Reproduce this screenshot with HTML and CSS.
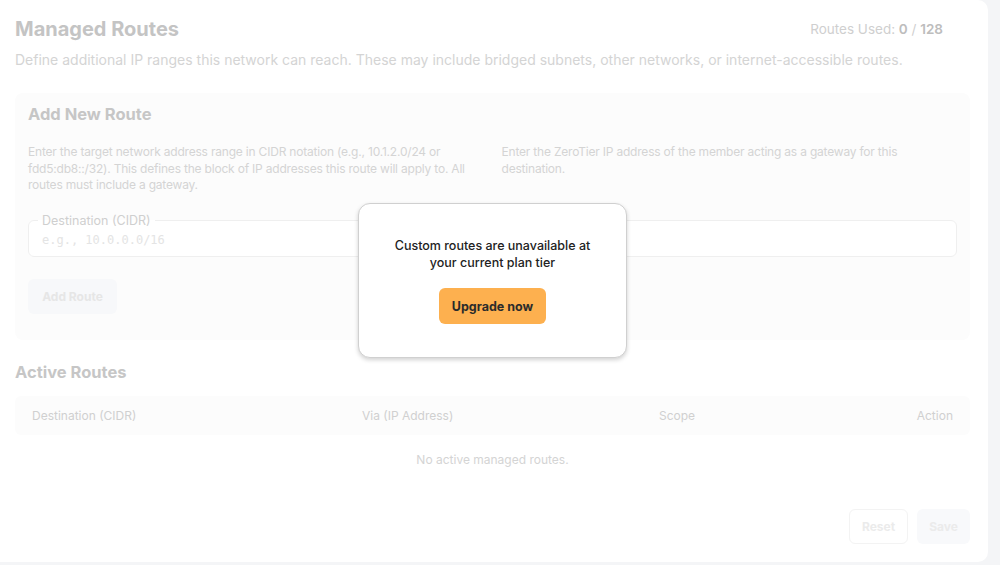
FILE: index.html
```html
<!DOCTYPE html>
<html lang="en">
<head>
  <meta charset="UTF-8">
  <meta name="viewport" content="width=device-width, initial-scale=1.0">
  <title>Managed Routes</title>
  <link rel="stylesheet" href="styles.css">
</head>
<body>
  <div class="card">
    <div class="card-content">
      <div class="card-header">
        <h1>Managed Routes</h1>
        <div class="usage">Routes Used: <b>0</b> / <b>128</b></div>
      </div>
      <p class="description">Define additional IP ranges this network can reach. These may include bridged subnets, other networks, or internet-accessible routes.</p>

      <div class="panel">
        <h2>Add New Route</h2>
        <div class="route-grid">
          <p class="help">Enter the target network address range in CIDR notation (e.g., 10.1.2.0/24 or fdd5:db8::/32). This defines the block of IP addresses this route will apply to. All routes must include a gateway.</p>
          <p class="help">Enter the ZeroTier IP address of the member acting as a gateway for this destination.</p>
          <fieldset class="field">
            <legend>Destination (CIDR)</legend>
            <input type="text" placeholder="e.g., 10.0.0.0/16" disabled>
          </fieldset>
          <fieldset class="field">
            <legend>Via (IP Address)</legend>
            <input type="text" placeholder="e.g., 10.0.0.1" disabled>
          </fieldset>
        </div>
        <button class="add-button" disabled>Add Route</button>
      </div>

      <h2 class="section-title">Active Routes</h2>
      <div class="table-head">
        <span>Destination (CIDR)</span>
        <span>Via (IP Address)</span>
        <span>Scope</span>
        <span>Action</span>
      </div>
      <p class="empty">No active managed routes.</p>

      <div class="footer">
        <button class="reset-button" disabled>Reset</button>
        <button class="save-button" disabled>Save</button>
      </div>
    </div>

    <div class="upgrade-modal">
      <p>Custom routes are unavailable at your current plan tier</p>
      <button class="upgrade-button">Upgrade now</button>
    </div>
  </div>
</body>
</html>
```

FILE: styles.css
```css
body {
  font-family: Inter, "Noto Sans", sans-serif;
  background-color: #f4f5f7;
  margin: 0;
  overflow: hidden;
}

.card {
  position: relative;
  width: 988px;
  height: 562px;
  background-color: #fff;
  border-radius: 0 10px 10px 0;
  box-sizing: border-box;
}

.card-content {
  padding: 17px 18px 0 15px;
}

.card-header {
  display: flex;
  justify-content: space-between;
  align-items: center;
}

h1 {
  margin: 0;
  font-size: 20px;
  line-height: 24px;
  font-weight: 700;
  color: #c4c4c4;
}

.usage {
  margin-right: 27px;
  font-size: 13.5px;
  color: #cfcfcf;
}

.usage b {
  color: #bdbdbd;
  font-weight: 600;
}

.description {
  margin: 9px 0 0;
  font-size: 14px;
  line-height: 20px;
  color: #d4d4d4;
}

.panel {
  margin-top: 23px;
  padding: 11px 13px 26px;
  background-color: #fcfcfc;
  border-radius: 8px;
}

h2 {
  margin: 0;
  font-size: 16.5px;
  line-height: 20px;
  font-weight: 700;
  color: #c6c6c6;
}

.route-grid {
  display: grid;
  grid-template-columns: 1fr 1fr;
  column-gap: 18px;
  margin-top: 20px;
}

.help {
  margin: 0 0 20px;
  font-size: 12px;
  line-height: 16.5px;
  letter-spacing: -0.2px;
  color: #d4d4d4;
}

.field {
  margin: 0;
  padding: 0 13px 4px;
  border: 1px solid #efefef;
  border-radius: 6px;
  background-color: #fff;
  min-width: 0;
}

.field legend {
  padding: 0 4px;
  margin-left: -4px;
  font-size: 12.5px;
  line-height: 14px;
  color: #cfcfcf;
}

.field input {
  display: block;
  width: 100%;
  height: 24px;
  padding: 0;
  border: none;
  background: transparent;
  font-family: "DejaVu Sans Mono", monospace;
  font-size: 12px;
}

.field input::placeholder {
  color: #e4e4e4;
}

button {
  font-family: Inter, "Noto Sans", sans-serif;
  font-size: 12px;
  font-weight: 700;
  border-radius: 6px;
  cursor: pointer;
}

.add-button {
  margin-top: 22px;
  width: 89px;
  height: 35px;
  border: none;
  background-color: #f7f8fa;
  color: #e6e6e6;
}

.section-title {
  margin-top: 22px;
}

.table-head {
  display: grid;
  grid-template-columns: 330px 297px 1fr auto;
  align-items: center;
  height: 39px;
  margin-top: 14px;
  padding: 0 17px;
  background-color: #fcfcfc;
  border-radius: 6px;
  font-size: 12px;
  color: #d0d0d0;
}

.empty {
  margin: 18px 0 0;
  text-align: center;
  font-size: 12px;
  line-height: 14px;
  color: #d4d4d4;
}

.footer {
  display: flex;
  justify-content: flex-end;
  gap: 9px;
  margin-top: 42px;
}

.reset-button {
  width: 59px;
  height: 35px;
  background-color: #fff;
  border: 1px solid #f3f3f3;
  color: #ebebeb;
}

.save-button {
  width: 53px;
  height: 35px;
  background-color: #f8f9fb;
  border: none;
  color: #ebebeb;
}

.upgrade-modal {
  position: absolute;
  left: 358px;
  top: 203px;
  width: 269px;
  height: 155px;
  box-sizing: border-box;
  padding: 33px 20px 0;
  background-color: #fff;
  border: 1px solid #d0d0d0;
  border-radius: 12px;
  box-shadow: 0 2px 4px rgba(0, 0, 0, 0.18);
  text-align: center;
}

.upgrade-modal p {
  margin: 0 auto;
  max-width: 215px;
  font-size: 12.5px;
  line-height: 17px;
  font-weight: 500;
  color: #222;
}

.upgrade-button {
  margin-top: 17px;
  width: 107px;
  height: 36px;
  border: none;
  background-color: #fdb04f;
  color: #2b2b2b;
  font-size: 12.5px;
}
```
